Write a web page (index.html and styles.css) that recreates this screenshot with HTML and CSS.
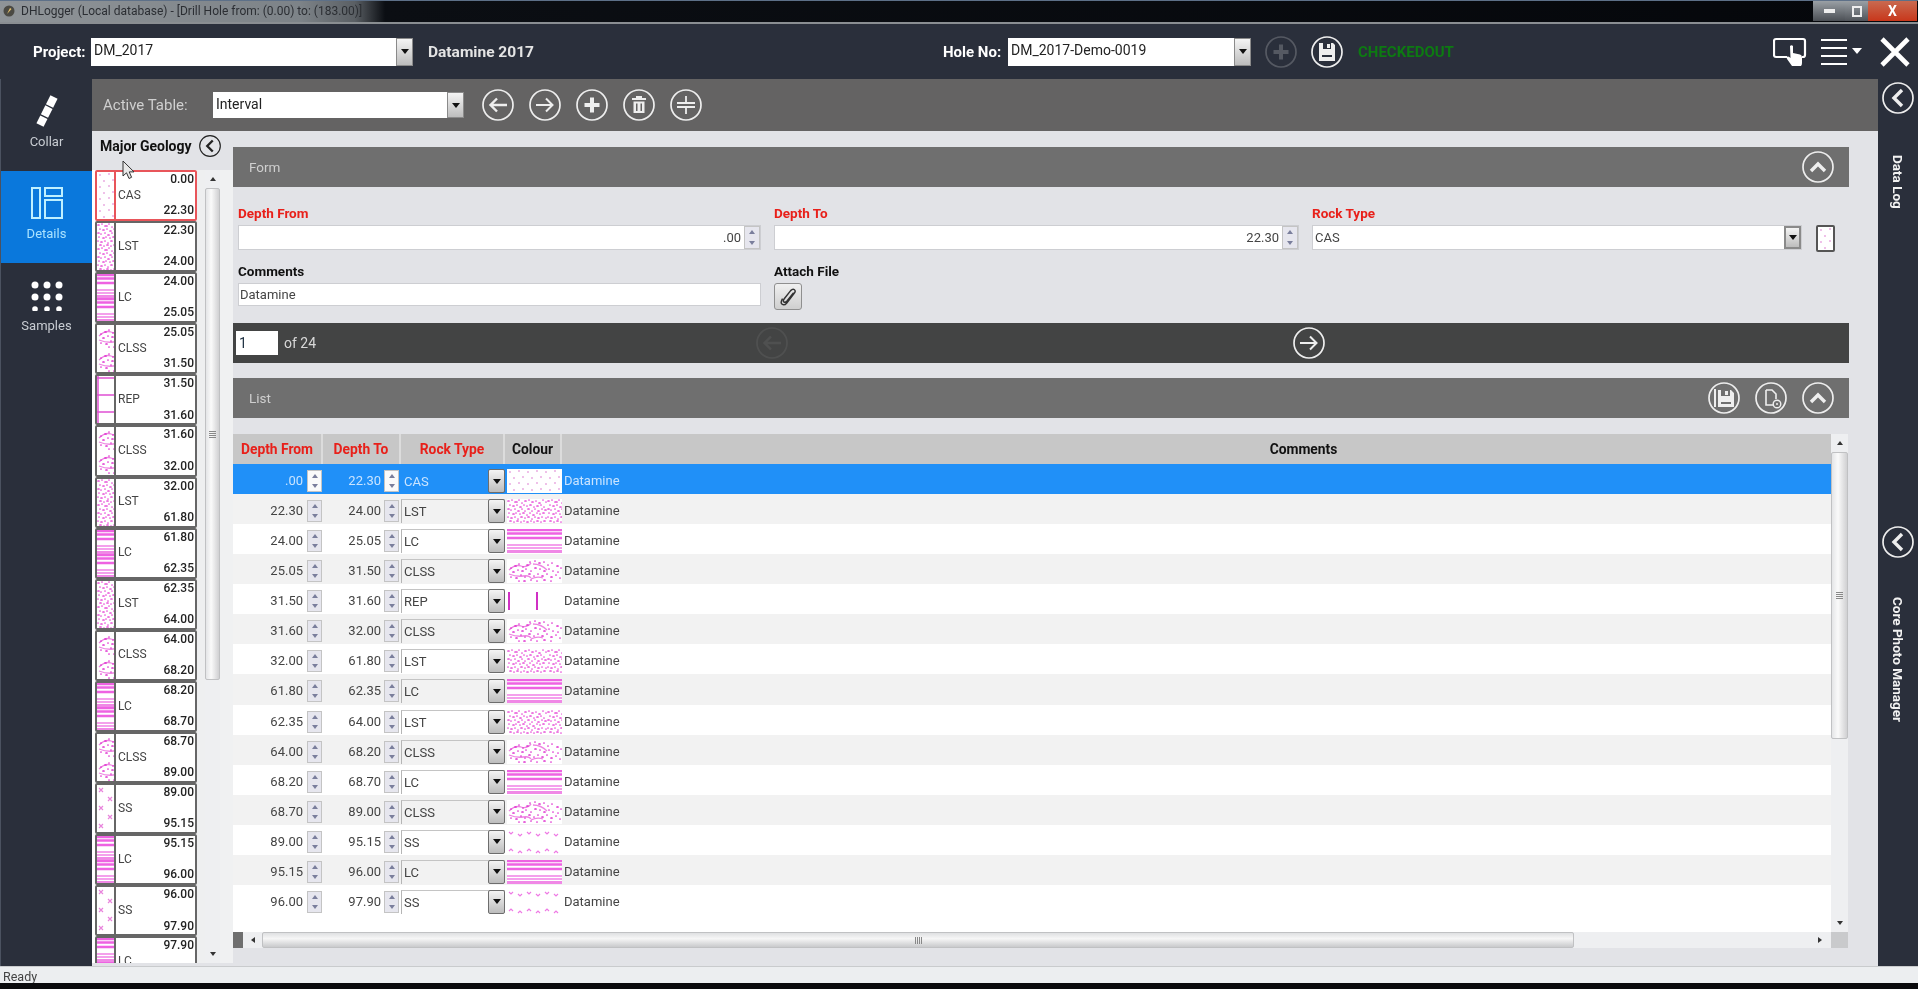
FILE: index.html
```html
<!DOCTYPE html>
<html lang="en">
<head>
    <meta charset="UTF-8">
    <meta name="viewport" content="width=device-width, initial-scale=1.0">
    <title>DHLogger (Local database) - [Drill Hole from: (0.00) to: (183.00)]</title>
    <link rel="stylesheet" href="styles.css">
</head>
<body>
<svg class="defs" aria-hidden="true">
    <defs>
        <!-- rock fill patterns -->
        <pattern id="p-cas" width="18" height="12" patternUnits="userSpaceOnUse">
            <path d="M3 3h0M12 2h0M7 9h0M16 8h0" stroke="#d96ccb" stroke-width="1.600" stroke-linecap="round"/>
        </pattern>
        <pattern id="p-lst" width="40" height="24" patternUnits="userSpaceOnUse">
            <rect width="40" height="24" fill="#fff"/>
            <path d="M1 2h1M5 1h0M8 3h2M12 1h0M15 4h0M18 2h1M22 1h0M25 3h1M29 2h0M32 4h1M36 1h0M39 3h0M3 6h0M6 7h1M10 6h0M13 8h1M17 6h0M20 7h0M23 6h1M27 8h0M30 7h1M34 6h0M37 8h0M1 10h1M4 11h0M8 10h0M11 12h1M15 10h0M18 12h0M21 10h1M25 12h0M28 10h0M31 12h1M35 10h0M38 11h1M2 14h0M6 15h1M9 14h0M13 15h0M16 14h1M20 16h0M23 14h0M26 16h1M30 14h0M33 15h0M36 14h1M1 18h0M4 19h1M8 18h0M11 20h0M14 18h1M18 19h0M21 18h1M25 20h0M28 18h0M31 19h1M35 18h0M39 19h0M3 22h1M7 23h0M10 22h1M14 23h0M17 22h0M20 23h1M24 22h0M27 23h0M30 22h1M34 23h0M37 22h1" stroke="#e84fd8" stroke-width="1.700" stroke-linecap="round"/>
        </pattern>
        <pattern id="p-lc" width="56" height="24" patternUnits="userSpaceOnUse">
            <rect width="56" height="24" fill="#fff"/>
            <path d="M0 1h56M0 4.500h56M0 9h56" stroke="#ee62e2" stroke-width="2.500"/>
            <rect y="15" width="56" height="2" fill="#f4a0ec"/>
            <rect y="18" width="56" height="2" fill="#f4a0ec"/>
            <rect y="21" width="56" height="3" fill="#f088e6"/>
        </pattern>
        <pattern id="p-clss" width="56" height="24" patternUnits="userSpaceOnUse">
            <rect width="56" height="24" fill="#fff"/>
            <path d="M2 11q6-6 12-4t10-3M2 15q8 3 14 2t8 2M26 5q8 0 14 6M24 20q6-3 12-1" fill="none" stroke="#ee85e2" stroke-width="1.300"/>
            <path d="M4 9h0M8 7h1M12 5h0M16 8h0M20 6h1M23 3h0M28 2h0M32 4h1M37 3h0M41 6h0M45 4h0M50 7h1M54 9h0M6 13h1M11 11h0M15 12h1M19 10h0M24 12h0M28 9h1M33 10h0M37 12h1M42 10h0M46 12h0M51 13h0M4 18h0M9 19h1M14 16h0M18 18h0M22 15h1M27 17h0M31 15h0M35 17h1M40 15h0M44 18h1M49 16h0M53 19h0M12 22h0M17 22h1M24 21h0M30 22h0M37 21h1M44 22h0" stroke="#e030d0" stroke-width="1.700" stroke-linecap="round"/>
        </pattern>
        <pattern id="p-rep" width="28" height="24" patternUnits="userSpaceOnUse">
            <path d="M2 3v18" stroke="#d030c4" stroke-width="2"/>
        </pattern>
        <pattern id="p-ss" width="18" height="24" patternUnits="userSpaceOnUse">
            <path d="M2 2l2 2 2-2M11 4l2 2 2-2M2 21l2-2 2 2M11 23l2-2 2 2" fill="none" stroke="#ee7ae4" stroke-width="1.200"/>
        </pattern>
        <pattern id="p-repg" width="19" height="47" patternUnits="userSpaceOnUse">
            <path d="M1 0v47M0 2h19M0 19h19M0 36h19" fill="none" stroke="#e050d4" stroke-width="1.500"/>
        </pattern>
        <pattern id="p-ssg" width="19" height="18" patternUnits="userSpaceOnUse">
            <path d="M2 3l4 4M6 3l-4 4M11 12l4 4M15 12l-4 4" fill="none" stroke="#e884dc" stroke-width="1.200"/>
        </pattern>

        <!-- round button icons, 32 box -->
        <symbol id="i-ring" viewBox="0 0 32 32"><circle cx="16" cy="16" r="15" fill="none" stroke="currentColor" stroke-width="1.700"/></symbol>
        <symbol id="i-back" viewBox="0 0 32 32"><path d="M25 16H9M15 9.500 8.500 16l6.500 6.500" fill="none" stroke="currentColor" stroke-width="2.400"/></symbol>
        <symbol id="i-next" viewBox="0 0 32 32"><path d="M7 16h16M17 9.500l6.500 6.500-6.500 6.500" fill="none" stroke="currentColor" stroke-width="2"/></symbol>
        <symbol id="i-plus" viewBox="0 0 32 32"><path d="M16 8.500v15M8.500 16h15" fill="none" stroke="currentColor" stroke-width="4"/></symbol>
        <symbol id="i-trash" viewBox="0 0 32 32"><path fill="currentColor" fill-rule="evenodd" d="M13 7h6v2h4v2H9V9h4zM10.500 12.500h11V24h-11zM13 14.500V22h1.500v-7.500zM17.500 14.500V22H19v-7.500z"/></symbol>
        <symbol id="i-split" viewBox="0 0 32 32"><path d="M16 7v7M7 14h18M7 18h18M16 18v7" fill="none" stroke="currentColor" stroke-width="1.800"/></symbol>
        <symbol id="i-up" viewBox="0 0 32 32"><path d="M9 20l7-7 7 7" fill="none" stroke="currentColor" stroke-width="3.400"/></symbol>
        <symbol id="i-left" viewBox="0 0 32 32"><path d="M20 8l-8 8 8 8" fill="none" stroke="currentColor" stroke-width="3.400"/></symbol>
        <symbol id="i-save" viewBox="0 0 32 32"><path fill="currentColor" fill-rule="evenodd" d="M8 7h4v6h8V7h2l2 2v16H8zM16 8h3v4h-3zM11 19v2h10v-2z"/></symbol>
        <symbol id="i-savelist" viewBox="0 0 32 32"><path fill="currentColor" fill-rule="evenodd" d="M6 7h2v18H6zM10 8h3v6h9V8h1l3 3v14H10zM17 9h3v4h-3zM13 20v2h10v-2z"/></symbol>
        <symbol id="i-doc" viewBox="0 0 32 32"><path d="M11 8h6l4 4v5M11 8v15h7" fill="none" stroke="currentColor" stroke-width="1.600"/><circle cx="22" cy="22" r="3.800" fill="none" stroke="currentColor" stroke-width="1.400"/><circle cx="22" cy="22" r="1" fill="currentColor"/></symbol>
    </defs>
</svg>

<div class="app">
    <div class="titlebar">
        <svg class="app-ico" viewBox="0 0 12 12"><circle cx="6" cy="6" r="5.500" fill="#4b4a44"/><path d="M4 9l3-6 1.500 1z" fill="#e9c46a"/></svg>
        <span class="title-text">DHLogger (Local database) - [Drill Hole from: (0.00) to: (183.00)]</span>
        <div class="winbtns">
            <span class="win min"><i></i></span>
            <span class="win rest"><i></i></span>
            <span class="win close">X</span>
        </div>
    </div>

    <header class="topbar">
        <div class="top-left">
            <label class="top-label">Project:</label>
            <div class="combo combo-project"><span>DM_2017</span><i class="drop"></i></div>
            <span class="project-name">Datamine 2017</span>
        </div>
        <div class="top-hole">
            <label class="top-label hole-label">Hole No:</label>
            <div class="combo combo-hole"><span>DM_2017-Demo-0019</span><i class="drop"></i></div>
            <span class="round faded"><svg><use href="#i-ring"/></svg><svg><use href="#i-plus"/></svg></span>
            <span class="round"><svg><use href="#i-ring"/></svg><svg><use href="#i-save"/></svg></span>
            <span class="checkedout">CHECKEDOUT</span>
        </div>
        <div class="top-right">
            <svg class="ico-touch" viewBox="0 0 34 30">
                <path d="M14 20H3q-2 0-2-2V4q0-2 2-2h27q2 0 2 2v14q0 2-2 2h-1" fill="none" stroke="#fff" stroke-width="2.200"/>
                <path d="M17 9q1.500-1.500 3 0v7l7 1.500q2 .5 2 3V26q0 2-1 3H19l-5-7q-1-2 .5-2.500t3 1.500z" fill="#fff"/>
            </svg>
            <svg class="ico-menu" viewBox="0 0 42 28">
                <path d="M1 2h26M1 10h26M1 18h26M1 26h26" stroke="#fff" stroke-width="2"/>
                <path d="M32 10h10l-5 6z" fill="#fff"/>
            </svg>
            <svg class="ico-close" viewBox="0 0 32 30"><path d="M3 2l26 26M29 2 3 28" stroke="#fff" stroke-width="4.600"/></svg>
        </div>
    </header>

    <div class="middle">
        <nav class="sidebar">
            <a class="nav-item">
                <svg viewBox="0 0 32 32"><path d="M23 2 9 30" fill="none" stroke="#fff" stroke-width="8" stroke-dasharray="10 1.300"/></svg>
                <span>Collar</span>
            </a>
            <a class="nav-item active">
                <svg viewBox="0 0 32 32"><path fill="none" stroke="#bff0ff" stroke-width="2" d="M1 1h8v30H1zM14 1h17v8H14zM14 13h17v18H14z"/></svg>
                <span>Details</span>
            </a>
            <a class="nav-item">
                <svg viewBox="0 0 32 32"><g fill="#fff"><circle cx="4" cy="6" r="3.500"/><circle cx="16" cy="6" r="3.500"/><circle cx="28" cy="6" r="3.500"/><circle cx="4" cy="18" r="3.500"/><circle cx="16" cy="18" r="3.500"/><circle cx="28" cy="18" r="3.500"/><circle cx="4" cy="30" r="2.800"/><circle cx="16" cy="30" r="2.800"/><circle cx="28" cy="30" r="2.800"/></g></svg>
                <span>Samples</span>
            </a>
        </nav>

        <main class="main">
            <div class="toolbar">
                <label class="tool-label">Active Table:</label>
                <div class="combo combo-table"><span>Interval</span><i class="drop"></i></div>
                <div class="tool-btns">
                    <span class="round"><svg><use href="#i-ring"/></svg><svg><use href="#i-back"/></svg></span>
                    <span class="round"><svg><use href="#i-ring"/></svg><svg><use href="#i-next"/></svg></span>
                    <span class="round"><svg><use href="#i-ring"/></svg><svg><use href="#i-plus"/></svg></span>
                    <span class="round"><svg><use href="#i-ring"/></svg><svg><use href="#i-trash"/></svg></span>
                    <span class="round"><svg><use href="#i-ring"/></svg><svg><use href="#i-split"/></svg></span>
                </div>
            </div>

            <div class="work">
                <aside class="geo">
                    <div class="geo-head">
                        <b>Major Geology</b>
                        <span class="round round-sm"><svg><use href="#i-ring"/></svg><svg><use href="#i-left"/></svg></span>
                    </div>
                    <div class="geo-body">
                        <div class="geo-list">
                            <div class="geo-row current"><svg class="geo-sw"><rect width="100%" height="100%" fill="url(#p-cas)"/></svg><div class="geo-txt"><b>0.00</b><span>CAS</span><b>22.30</b></div></div>
                            <div class="geo-row"><svg class="geo-sw"><rect width="100%" height="100%" fill="url(#p-lst)"/></svg><div class="geo-txt"><b>22.30</b><span>LST</span><b>24.00</b></div></div>
                            <div class="geo-row"><svg class="geo-sw"><rect width="100%" height="100%" fill="url(#p-lc)"/></svg><div class="geo-txt"><b>24.00</b><span>LC</span><b>25.05</b></div></div>
                            <div class="geo-row"><svg class="geo-sw"><rect width="100%" height="100%" fill="url(#p-clss)"/></svg><div class="geo-txt"><b>25.05</b><span>CLSS</span><b>31.50</b></div></div>
                            <div class="geo-row"><svg class="geo-sw"><rect width="100%" height="100%" fill="url(#p-repg)"/></svg><div class="geo-txt"><b>31.50</b><span>REP</span><b>31.60</b></div></div>
                            <div class="geo-row"><svg class="geo-sw"><rect width="100%" height="100%" fill="url(#p-clss)"/></svg><div class="geo-txt"><b>31.60</b><span>CLSS</span><b>32.00</b></div></div>
                            <div class="geo-row"><svg class="geo-sw"><rect width="100%" height="100%" fill="url(#p-lst)"/></svg><div class="geo-txt"><b>32.00</b><span>LST</span><b>61.80</b></div></div>
                            <div class="geo-row"><svg class="geo-sw"><rect width="100%" height="100%" fill="url(#p-lc)"/></svg><div class="geo-txt"><b>61.80</b><span>LC</span><b>62.35</b></div></div>
                            <div class="geo-row"><svg class="geo-sw"><rect width="100%" height="100%" fill="url(#p-lst)"/></svg><div class="geo-txt"><b>62.35</b><span>LST</span><b>64.00</b></div></div>
                            <div class="geo-row"><svg class="geo-sw"><rect width="100%" height="100%" fill="url(#p-clss)"/></svg><div class="geo-txt"><b>64.00</b><span>CLSS</span><b>68.20</b></div></div>
                            <div class="geo-row"><svg class="geo-sw"><rect width="100%" height="100%" fill="url(#p-lc)"/></svg><div class="geo-txt"><b>68.20</b><span>LC</span><b>68.70</b></div></div>
                            <div class="geo-row"><svg class="geo-sw"><rect width="100%" height="100%" fill="url(#p-clss)"/></svg><div class="geo-txt"><b>68.70</b><span>CLSS</span><b>89.00</b></div></div>
                            <div class="geo-row"><svg class="geo-sw"><rect width="100%" height="100%" fill="url(#p-ssg)"/></svg><div class="geo-txt"><b>89.00</b><span>SS</span><b>95.15</b></div></div>
                            <div class="geo-row"><svg class="geo-sw"><rect width="100%" height="100%" fill="url(#p-lc)"/></svg><div class="geo-txt"><b>95.15</b><span>LC</span><b>96.00</b></div></div>
                            <div class="geo-row"><svg class="geo-sw"><rect width="100%" height="100%" fill="url(#p-ssg)"/></svg><div class="geo-txt"><b>96.00</b><span>SS</span><b>97.90</b></div></div>
                            <div class="geo-row"><svg class="geo-sw"><rect width="100%" height="100%" fill="url(#p-lc)"/></svg><div class="geo-txt"><b>97.90</b><span>LC</span></div></div>
                        </div>
                        <div class="vbar geo-bar">
                            <i class="arr-up"></i>
                            <div class="thumb geo-thumb"><i class="grip"></i></div>
                            <i class="arr-down"></i>
                        </div>
                    </div>
                    <svg class="cursor" viewBox="0 0 13 20"><path d="M1 1v15l3.500-3.200L7 18.500l2.600-1.200-2.400-5.400H12z" fill="#e8e8e8" stroke="#333" stroke-width="1"/></svg>
                </aside>

                <section class="content">
                    <div class="bar">
                        <span>Form</span>
                        <span class="round"><svg><use href="#i-ring"/></svg><svg><use href="#i-up"/></svg></span>
                    </div>
                    <div class="form">
                        <div class="cell">
                            <label class="req">Depth From</label>
                            <div class="field num-field"><span>.00</span><i class="spin"></i></div>
                        </div>
                        <div class="cell">
                            <label class="req">Depth To</label>
                            <div class="field num-field"><span>22.30</span><i class="spin"></i></div>
                        </div>
                        <div class="cell">
                            <label class="req">Rock Type</label>
                            <div class="rock-line">
                                <div class="field rock-field"><span>CAS</span><i class="drop"></i></div>
                                <svg class="rock-sw"><rect width="100%" height="100%" fill="url(#p-cas)"/></svg>
                            </div>
                        </div>
                        <div class="cell">
                            <label>Comments</label>
                            <div class="field comment-field"><span>Datamine</span></div>
                        </div>
                        <div class="cell">
                            <label>Attach File</label>
                            <span class="clip">
                                <svg viewBox="0 0 20 22"><path d="M16 6 8 16q-2 2-3.500.8T5 13l7.500-9.500q2.500-2.500 4.500-1t-.5 4.500L8 18q-3 3.500-5.500 1.500T3 13" fill="none" stroke="#333" stroke-width="1.700"/></svg>
                            </span>
                        </div>
                    </div>

                    <div class="pager">
                        <div class="pager-count"><span class="page-box">1</span><span>of 24</span></div>
                        <span class="round faded-more"><svg><use href="#i-ring"/></svg><svg><use href="#i-back"/></svg></span>
                        <span></span>
                        <span class="round"><svg><use href="#i-ring"/></svg><svg><use href="#i-next"/></svg></span>
                    </div>

                    <div class="bar list-bar">
                        <span>List</span>
                        <div class="bar-btns">
                            <span class="round"><svg><use href="#i-ring"/></svg><svg><use href="#i-savelist"/></svg></span>
                            <span class="round"><svg><use href="#i-ring"/></svg><svg><use href="#i-doc"/></svg></span>
                            <span class="round"><svg><use href="#i-ring"/></svg><svg><use href="#i-up"/></svg></span>
                        </div>
                    </div>

                    <div class="table-wrap">
                        <div class="table">
                            <div class="tr thead">
                                <span class="req">Depth From</span>
                                <span class="req">Depth To</span>
                                <span class="req">Rock Type</span>
                                <span>Colour</span>
                                <span class="th-comments">Comments</span>
                            </div>
                            <div class="tr selected"><span class="num">.00<i class="spin"></i></span><span class="num">22.30<i class="spin"></i></span><span class="rock">CAS<i class="drop"></i></span><svg class="sw"><rect width="100%" height="100%" fill="#fff"/><rect width="100%" height="100%" fill="url(#p-cas)"/></svg><span class="note">Datamine</span></div>
                            <div class="tr"><span class="num">22.30<i class="spin"></i></span><span class="num">24.00<i class="spin"></i></span><span class="rock">LST<i class="drop"></i></span><svg class="sw"><rect width="100%" height="100%" fill="url(#p-lst)"/></svg><span class="note">Datamine</span></div>
                            <div class="tr"><span class="num">24.00<i class="spin"></i></span><span class="num">25.05<i class="spin"></i></span><span class="rock">LC<i class="drop"></i></span><svg class="sw"><rect width="100%" height="100%" fill="url(#p-lc)"/></svg><span class="note">Datamine</span></div>
                            <div class="tr"><span class="num">25.05<i class="spin"></i></span><span class="num">31.50<i class="spin"></i></span><span class="rock">CLSS<i class="drop"></i></span><svg class="sw"><rect width="100%" height="100%" fill="url(#p-clss)"/></svg><span class="note">Datamine</span></div>
                            <div class="tr"><span class="num">31.50<i class="spin"></i></span><span class="num">31.60<i class="spin"></i></span><span class="rock">REP<i class="drop"></i></span><svg class="sw"><rect width="100%" height="100%" fill="url(#p-rep)"/></svg><span class="note">Datamine</span></div>
                            <div class="tr"><span class="num">31.60<i class="spin"></i></span><span class="num">32.00<i class="spin"></i></span><span class="rock">CLSS<i class="drop"></i></span><svg class="sw"><rect width="100%" height="100%" fill="url(#p-clss)"/></svg><span class="note">Datamine</span></div>
                            <div class="tr"><span class="num">32.00<i class="spin"></i></span><span class="num">61.80<i class="spin"></i></span><span class="rock">LST<i class="drop"></i></span><svg class="sw"><rect width="100%" height="100%" fill="url(#p-lst)"/></svg><span class="note">Datamine</span></div>
                            <div class="tr"><span class="num">61.80<i class="spin"></i></span><span class="num">62.35<i class="spin"></i></span><span class="rock">LC<i class="drop"></i></span><svg class="sw"><rect width="100%" height="100%" fill="url(#p-lc)"/></svg><span class="note">Datamine</span></div>
                            <div class="tr"><span class="num">62.35<i class="spin"></i></span><span class="num">64.00<i class="spin"></i></span><span class="rock">LST<i class="drop"></i></span><svg class="sw"><rect width="100%" height="100%" fill="url(#p-lst)"/></svg><span class="note">Datamine</span></div>
                            <div class="tr"><span class="num">64.00<i class="spin"></i></span><span class="num">68.20<i class="spin"></i></span><span class="rock">CLSS<i class="drop"></i></span><svg class="sw"><rect width="100%" height="100%" fill="url(#p-clss)"/></svg><span class="note">Datamine</span></div>
                            <div class="tr"><span class="num">68.20<i class="spin"></i></span><span class="num">68.70<i class="spin"></i></span><span class="rock">LC<i class="drop"></i></span><svg class="sw"><rect width="100%" height="100%" fill="url(#p-lc)"/></svg><span class="note">Datamine</span></div>
                            <div class="tr"><span class="num">68.70<i class="spin"></i></span><span class="num">89.00<i class="spin"></i></span><span class="rock">CLSS<i class="drop"></i></span><svg class="sw"><rect width="100%" height="100%" fill="url(#p-clss)"/></svg><span class="note">Datamine</span></div>
                            <div class="tr"><span class="num">89.00<i class="spin"></i></span><span class="num">95.15<i class="spin"></i></span><span class="rock">SS<i class="drop"></i></span><svg class="sw"><rect width="100%" height="100%" fill="url(#p-ss)"/></svg><span class="note">Datamine</span></div>
                            <div class="tr"><span class="num">95.15<i class="spin"></i></span><span class="num">96.00<i class="spin"></i></span><span class="rock">LC<i class="drop"></i></span><svg class="sw"><rect width="100%" height="100%" fill="url(#p-lc)"/></svg><span class="note">Datamine</span></div>
                            <div class="tr"><span class="num">96.00<i class="spin"></i></span><span class="num">97.90<i class="spin"></i></span><span class="rock">SS<i class="drop"></i></span><svg class="sw"><rect width="100%" height="100%" fill="url(#p-ss)"/></svg><span class="note">Datamine</span></div>
                        </div>
                        <div class="vbar table-bar">
                            <i class="arr-up"></i>
                            <div class="thumb table-thumb"><i class="grip"></i></div>
                            <i class="arr-down"></i>
                        </div>
                        <div class="hbar">
                            <span class="hbar-end"></span>
                            <i class="arr-left"></i>
                            <div class="hthumb"><i class="grip grip-h"></i></div>
                            <i class="arr-right"></i>
                        </div>
                        <span class="corner"></span>
                    </div>
                </section>
            </div>
        </main>

        <aside class="rail">
            <span class="round rail-first"><svg><use href="#i-ring"/></svg><svg><use href="#i-left"/></svg></span>
            <span class="rail-text rail-log">Data Log</span>
            <span class="round rail-second"><svg><use href="#i-ring"/></svg><svg><use href="#i-left"/></svg></span>
            <span class="rail-text rail-photo">Core Photo Manager</span>
        </aside>
    </div>

    <footer class="status">Ready</footer>
    <div class="footer-edge"></div>
</div>
</body>
</html>
```

FILE: styles.css
```css
*{
    box-sizing: border-box;
}

html, body{
    height: 100%;
}

body{
    margin: 0;
    overflow: hidden;
    background: #000;
    font-family: Roboto, "Liberation Sans", sans-serif;
    font-size: 13px;
    color: #333;
}

.defs{
    position: absolute;
    width: 0;
    height: 0;
}

.app{
    display: flex;
    flex-direction: column;
    height: 100vh;
    filter: blur(.4px);
}

/* window title */
.titlebar{
    flex: none;
    display: flex;
    align-items: center;
    height: 24px;
    padding: 1px 0 2px 3px;
    background: linear-gradient(to right, #8f9498 0, #7d8388 300px, #5a5f64 355px, #0b0e13 385px, #05070b 100%);
    border-top: 1px solid #5d7088;
    border-bottom: 2px solid #8a8e92;
    font-size: 12px;
    color: #2b2e33;
}

.app-ico{
    width: 12px;
    height: 12px;
    margin-right: 6px;
}

.winbtns{
    display: flex;
    height: 20px;
    margin-left: auto;
    margin-right: 1px;
}

.win{
    display: flex;
    align-items: center;
    justify-content: center;
    height: 100%;
}

.min{
    width: 32px;
    background: linear-gradient(#9aa0a5, #4b4f55);
}

.min i{
    width: 11px;
    height: 4px;
    background: #eee;
}

.rest{
    width: 23px;
    background: linear-gradient(#9aa0a5, #4f5359);
}

.rest i{
    width: 10px;
    height: 11px;
    border: 2px solid #eee;
}

.close{
    width: 49px;
    background: linear-gradient(#c96a50, #c8371b);
    color: #fff;
    font-weight: 700;
    font-size: 14px;
}

/* project bar */
.topbar{
    flex: none;
    display: flex;
    align-items: center;
    height: 55px;
    background: #2a2f3b;
    color: #fff;
}

.top-left{
    flex: none;
    display: flex;
    align-items: center;
    width: 943px;
    padding-left: 33px;
}

.top-label{
    width: 58px;
    font-size: 15px;
    font-weight: 700;
}

.project-name{
    margin-left: 15px;
    font-size: 15.500px;
    font-weight: 700;
    color: #e4e4e4;
}

.top-hole{
    display: flex;
    align-items: center;
}

.hole-label{
    width: 65px;
}

.combo{
    display: flex;
    align-items: stretch;
    justify-content: space-between;
    background: #fff;
    color: #222;
    font-size: 14px;
    line-height: 24px;
    padding-left: 3px;
}

.combo-project{
    width: 322px;
    height: 28px;
}

.combo-hole{
    width: 243px;
    height: 28px;
    margin-right: 14px;
}

.combo-table{
    width: 251px;
    height: 26px;
}

.top-hole .round + .round{
    margin-left: 14px;
}

.checkedout{
    margin-left: 15px;
    font-size: 15px;
    font-weight: 700;
    color: #0d7a12;
}

.top-right{
    display: flex;
    align-items: center;
    margin-left: auto;
    padding-right: 7px;
}

.ico-touch{
    width: 34px;
    height: 30px;
    margin-right: 13px;
}

.ico-menu{
    width: 42px;
    height: 28px;
    margin-right: 17px;
}

.ico-close{
    width: 32px;
    height: 30px;
}

/* shared widgets */
.round{
    flex: none;
    display: inline-grid;
    width: 32px;
    height: 32px;
    color: #eee;
}

.round svg{
    grid-area: 1 / 1;
    width: 100%;
    height: 100%;
}

.round-sm{
    width: 22px;
    height: 22px;
    color: #222;
}

.faded{
    opacity: .22;
}

.faded-more{
    opacity: .07;
}

.drop{
    flex: none;
    display: flex;
    align-items: center;
    justify-content: center;
    width: 17px;
    background: linear-gradient(#f4f4f4, #bdbdbd);
    border: 1px solid #8a8a8a;
}

.drop::before{
    content: "";
    border-left: 4px solid transparent;
    border-right: 4px solid transparent;
    border-top: 5px solid #111;
}

.spin{
    flex: none;
    display: flex;
    flex-direction: column;
    align-items: center;
    justify-content: space-around;
    width: 15px;
    height: 22px;
    background: linear-gradient(#e6e6ee 50%, #a0a0a0 50%, #a0a0a0 52%, #e6e6ee 52%);
    border: 1px solid #c4c4c4;
}

.spin::before{
    content: "";
    border-left: 3px solid transparent;
    border-right: 3px solid transparent;
    border-bottom: 4px solid #7a7e9c;
}

.spin::after{
    content: "";
    border-left: 3px solid transparent;
    border-right: 3px solid transparent;
    border-top: 4px solid #7a7e9c;
}

/* left nav */
.middle{
    flex: 1;
    display: flex;
    min-height: 0;
    background: #2a2f3b;
}

.sidebar{
    flex: none;
    width: 92px;
    border-left: 1px solid #4b5260;
}

.nav-item{
    display: flex;
    flex-direction: column;
    align-items: center;
    gap: 7px;
    height: 92px;
    padding-top: 16px;
    font-size: 13px;
    line-height: 16px;
    color: #c8ccd2;
}

.nav-item svg{
    width: 32px;
    height: 32px;
}

.nav-item.active{
    background: #0a78dc;
    color: #a9e2ff;
}

/* main panel */
.main{
    flex: 1;
    display: flex;
    flex-direction: column;
    min-width: 0;
    background: #e2e3e7;
}

.toolbar{
    flex: none;
    display: flex;
    align-items: center;
    height: 52px;
    padding-left: 11px;
    background: #646363;
}

.tool-label{
    width: 110px;
    font-size: 15px;
    color: #cfcfcf;
}

.tool-btns{
    display: flex;
    gap: 15px;
    margin-left: 18px;
}

.work{
    flex: 1;
    display: flex;
    min-height: 0;
}

/* major geology strip */
.geo{
    position: relative;
    flex: none;
    display: flex;
    flex-direction: column;
    width: 141px;
    padding-bottom: 3px;
}

.geo-head{
    flex: none;
    display: flex;
    align-items: center;
    height: 39px;
    padding: 0 0 10px 8px;
    font-size: 14px;
    color: #111;
}

.geo-head .round{
    margin-left: 7px;
}

.geo-body{
    flex: 1;
    display: flex;
    min-height: 0;
    background: #f0f1f2;
}

.geo-list{
    width: 113px;
    padding-left: 3px;
    overflow: hidden;
    background: #fff;
    border-right: 8px solid #eeeff0;
}

.geo-row{
    display: flex;
    width: 102px;
    height: 51.100px;
    background: #fff;
    border: 2px solid #666;
    border-radius: 2px;
}

.geo-row.current{
    border-color: #e8555a;
}

.geo-sw{
    flex: none;
    width: 19px;
    height: 100%;
    border-right: 2px solid #666;
}

.current .geo-sw{
    border-right-color: #e8555a;
}

.geo-txt{
    flex: 1;
    display: flex;
    flex-direction: column;
    padding: 0 1px 0 2px;
    font-size: 12px;
    line-height: 15.600px;
    color: #444;
}

.geo-txt b{
    text-align: right;
    font-weight: 500;
    color: #222;
}

.vbar{
    flex: none;
    display: flex;
    flex-direction: column;
    align-items: center;
    background: #eeeff1;
}

.geo-bar{
    width: 15px;
}

.arr-up, .arr-down{
    flex: none;
    display: flex;
    align-items: center;
    justify-content: center;
    width: 100%;
    height: 18px;
}

.arr-up::before{
    content: "";
    border-left: 3px solid transparent;
    border-right: 3px solid transparent;
    border-bottom: 4px solid #333;
}

.arr-down{
    margin-top: auto;
}

.arr-down::before{
    content: "";
    border-left: 3px solid transparent;
    border-right: 3px solid transparent;
    border-top: 4px solid #333;
}

.thumb{
    display: flex;
    align-items: center;
    justify-content: center;
    width: 100%;
    background: linear-gradient(to right, #e4e5e7, #fafafa 40%, #d0d0d2);
    border: 1px solid #c0c1c3;
    border-radius: 2px;
}

.geo-thumb{
    height: 492px;
}

.table-thumb{
    height: 287px;
}

.grip{
    width: 7px;
    height: 7px;
    background: repeating-linear-gradient(#888 0 1px, transparent 1px 2px);
}

.grip-h{
    background: repeating-linear-gradient(to right, #888 0 1px, transparent 1px 2px);
}

.cursor{
    position: absolute;
    top: 29px;
    left: 30px;
    width: 13px;
    height: 20px;
}

/* form + list */
.content{
    flex: none;
    width: 1616px;
    padding-top: 16px;
}

.bar{
    display: flex;
    align-items: center;
    justify-content: space-between;
    height: 40px;
    padding: 0 15px 0 16px;
    background: #6f6f6f;
    font-size: 13.500px;
    color: #cfcfcf;
}

.bar-btns{
    display: flex;
    gap: 15px;
}

.form{
    display: grid;
    grid-template-columns: 523px 525px 1fr;
    gap: 13px;
    padding: 18px 14px 13px 5px;
}

.cell{
    display: flex;
    flex-direction: column;
    gap: 4px;
}

.cell label{
    height: 16px;
    font-size: 13.500px;
    line-height: 16px;
    font-weight: 700;
    color: #111;
}

.cell label.req{
    color: #e8201a;
}

.field{
    display: flex;
    align-items: center;
    background: #fff;
    border: 1px solid #cdced2;
    font-size: 13px;
    color: #444;
}

.num-field{
    justify-content: flex-end;
    height: 25px;
    gap: 3px;
}

.num-field .spin{
    width: 16px;
    height: 23px;
}

.rock-line{
    display: flex;
    align-items: flex-start;
    justify-content: space-between;
    height: 25px;
}

.rock-field{
    justify-content: space-between;
    width: 490px;
    height: 25px;
    padding-left: 2px;
}

.rock-field .drop{
    align-self: stretch;
    border: 2px solid #8a8a8a;
}

.rock-sw{
    width: 19px;
    height: 27px;
    background: #fff;
    border: 2px solid #555;
    border-radius: 2px;
}

.comment-field{
    height: 23px;
    padding-left: 1px;
}

.clip{
    display: flex;
    align-items: center;
    justify-content: center;
    width: 28px;
    height: 27px;
    background: linear-gradient(#f0f0f0, #cfcfcf);
    border: 1px solid #8f8f8f;
    border-radius: 3px;
}

.clip svg{
    width: 17px;
    height: 20px;
}

.pager{
    display: grid;
    grid-template-columns: 523px 32px 505px 32px;
    align-items: center;
    height: 40px;
    background: #434444;
    color: #d8d8d8;
}

.pager-count{
    display: flex;
    align-items: center;
    gap: 6px;
    padding-left: 3px;
    font-size: 14px;
}

.page-box{
    width: 42px;
    height: 24px;
    padding-left: 3px;
    background: #fff;
    color: #234;
    line-height: 24px;
}

.list-bar{
    margin-top: 15px;
}

.table-wrap{
    display: grid;
    grid-template-columns: 1598px 17px;
    grid-template-rows: 498px 16px;
    margin-top: 16px;
}

.table{
    background: #fff;
    overflow: hidden;
}

.tr{
    display: grid;
    grid-template-columns: 90px 78px 104px 57px 1fr;
    height: 30.070px;
    font-size: 13px;
    color: #444;
}

.tr:nth-child(odd){
    background: #f2f2f2;
}

.thead, .tr.thead:nth-child(odd){
    align-items: center;
    height: 30px;
    background: #c7c7c7;
    font-size: 13.800px;
    font-weight: 700;
    color: #111;
}

.thead span{
    height: 100%;
    line-height: 30px;
    text-align: center;
    border-right: 2px solid #dcdcdc;
}

.thead .req{
    color: #e8201a;
}

.thead .th-comments{
    padding-left: 214px;
    border-right: 0;
}

.tr.selected, .tr.selected:nth-child(odd){
    background: #2090f8;
    color: #c9e4ff;
}

.selected .spin{
    background: linear-gradient(#fafafa 50%, #a0a0a0 50%, #a0a0a0 52%, #fafafa 52%);
}

.num{
    display: flex;
    align-items: center;
    justify-content: flex-end;
    gap: 4px;
    padding: 3px 1px 0 0;
}

.num:nth-child(2){
    gap: 3px;
    padding-right: 2px;
}

.num .spin{
    margin-top: 1px;
}

.rock{
    display: flex;
    align-items: center;
    justify-content: space-between;
    height: 24px;
    margin-top: 5px;
    padding-left: 2px;
    border-left: 1px solid #b5b5b5;
    border-top: 1px solid #c4c4c4;
}

.tr:not(.selected):not(:nth-child(odd)) .rock{
    background: #fff;
}

.selected .rock{
    border-color: transparent;
}

.rock .drop{
    align-self: stretch;
    margin-top: -1px;
    height: 24px;
    border: 1.500px solid #6d6d6d;
    border-radius: 2px;
}

.sw{
    width: 55px;
    height: 24px;
    margin: 5px 0 0 2px;
}

.note{
    display: flex;
    align-items: center;
    padding: 3px 0 0 2px;
}

.table-bar{
    grid-row: 1;
    grid-column: 2;
}

.hbar{
    grid-row: 2;
    grid-column: 1;
    display: flex;
    align-items: center;
    background: #eeeff1;
}

.hbar-end{
    width: 10px;
    height: 100%;
    background: #6f6f6f;
}

.arr-left{
    display: flex;
    align-items: center;
    justify-content: center;
    width: 19px;
    height: 100%;
}

.arr-left::before{
    content: "";
    border-top: 3px solid transparent;
    border-bottom: 3px solid transparent;
    border-right: 4px solid #333;
}

.hthumb{
    display: flex;
    align-items: center;
    justify-content: center;
    width: 1312px;
    height: 100%;
    background: linear-gradient(#dfe0e2, #f6f6f6 40%, #c9cacc);
    border: 1px solid #c0c1c3;
    border-radius: 2px;
}

.arr-right{
    display: flex;
    align-items: center;
    justify-content: center;
    width: 17px;
    height: 100%;
    margin-left: auto;
    margin-right: 3px;
}

.arr-right::before{
    content: "";
    border-top: 3px solid transparent;
    border-bottom: 3px solid transparent;
    border-left: 4px solid #333;
}

.corner{
    grid-row: 2;
    grid-column: 2;
    background: #c9cacc;
}

/* right rail */
.rail{
    flex: none;
    display: flex;
    flex-direction: column;
    align-items: center;
    width: 40px;
    margin-left: auto;
    padding: 3px 1px 0 0;
    color: #f2f2f2;
}

.rail-text{
    writing-mode: vertical-rl;
    font-size: 13.500px;
    font-weight: 700;
    line-height: 20px;
}

.rail-log{
    margin-top: 41px;
    height: 55px;
}

.rail-second{
    margin-top: 316px;
}

.rail-photo{
    margin-top: 39px;
}

/* status line */
.status{
    flex: none;
    height: 17px;
    padding-left: 3px;
    background: #eceef0;
    border-top: 1px solid #c9cbcd;
    font-size: 12.500px;
    line-height: 19px;
    color: #444;
}

.footer-edge{
    flex: none;
    height: 6px;
    background: #0a0a0c;
}
```
